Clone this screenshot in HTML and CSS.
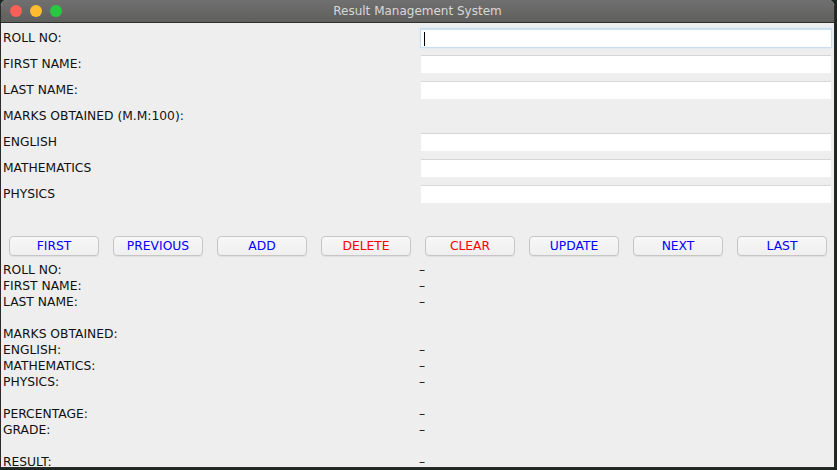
FILE: index.html
```html
<!DOCTYPE html>
<html>
<head>
<meta charset="utf-8">
<link rel="stylesheet" href="styles.css">
</head>
<body>
<div class="window">
  <div class="titlebar">
    <div class="lights">
      <span class="light red"></span>
      <span class="light yellow"></span>
      <span class="light green"></span>
    </div>
    <div class="title">Result Management System</div>
  </div>
  <div class="content">
    <div class="form">
      <div class="label">ROLL NO:</div><div class="cell"><div class="field focused"><span class="caret"></span></div></div>
      <div class="label">FIRST NAME:</div><div class="cell"><div class="field"></div></div>
      <div class="label">LAST NAME:</div><div class="cell"><div class="field"></div></div>
      <div class="label">MARKS OBTAINED (M.M:100):</div><div class="cell"></div>
      <div class="label">ENGLISH</div><div class="cell"><div class="field"></div></div>
      <div class="label">MATHEMATICS</div><div class="cell"><div class="field"></div></div>
      <div class="label">PHYSICS</div><div class="cell"><div class="field"></div></div>
      <div class="label"></div><div class="cell"></div>
    </div>
    <div class="buttons">
      <button class="btn blue">FIRST</button>
      <button class="btn blue">PREVIOUS</button>
      <button class="btn blue">ADD</button>
      <button class="btn red-t">DELETE</button>
      <button class="btn red-t">CLEAR</button>
      <button class="btn blue">UPDATE</button>
      <button class="btn blue">NEXT</button>
      <button class="btn blue">LAST</button>
    </div>
    <div class="result">
      <div>ROLL NO:</div><div>–</div>
      <div>FIRST NAME:</div><div>–</div>
      <div>LAST NAME:</div><div>–</div>
      <div></div><div></div>
      <div>MARKS OBTAINED:</div><div></div>
      <div>ENGLISH:</div><div>–</div>
      <div>MATHEMATICS:</div><div>–</div>
      <div>PHYSICS:</div><div>–</div>
      <div></div><div></div>
      <div>PERCENTAGE:</div><div>–</div>
      <div>GRADE:</div><div>–</div>
      <div></div><div></div>
      <div>RESULT:</div><div>–</div>
    </div>
  </div>
</div>
</body>
</html>
```
FILE: styles.css
```css
html, body {
  margin: 0;
  padding: 0;
  background: #1d2722;
  width: 837px;
  height: 470px;
  overflow: hidden;
}
.window {
  width: 833px;
  height: 467px;
  border: 1px solid #2b2b2b;
  border-top: none;
  border-radius: 6px 6px 0 0;
  background: #eeeeee;
  overflow: hidden;
  font-family: "DejaVu Sans", sans-serif;
  font-size: 12.3px;
  color: #111;
}
.titlebar {
  height: 22px;
  background: linear-gradient(#707070, #5f5f5e);
  border-bottom: 1px solid #2e2e2e;
  position: relative;
  display: flex;
  align-items: center;
}
.lights {
  display: flex;
  gap: 8px;
  padding-left: 9px;
}
.light {
  width: 12px;
  height: 12px;
  border-radius: 50%;
  display: block;
}
.light.red { background: #fe5f57; }
.light.yellow { background: #febc2e; }
.light.green { background: #28c840; }
.title {
  position: absolute;
  left: 0;
  right: 0;
  top: 0;
  line-height: 23px;
  text-align: center;
  color: #d8d8d8;
  font-size: 12px;
  font-family: "DejaVu Sans", sans-serif;
}
.content {
  padding-top: 2px;
}
.form {
  display: grid;
  grid-template-columns: 420px 410px;
  grid-auto-rows: 26px;
}
.label {
  padding-left: 2px;
  line-height: 26px;
  white-space: nowrap;
}
.cell {
  display: flex;
  align-items: center;
}
.field {
  width: 410px;
  height: 17px;
  background: #ffffff;
  border-top: 1px solid #d6d6d6;
  position: relative;
}
.field.focused {
  border-top-color: #cfe0ef;
  box-shadow: 0 0 0 1px #c9ddef, 0 0 2px 2px #e0ebf5;
}
.caret {
  position: absolute;
  left: 3px;
  top: 2px;
  width: 1px;
  height: 14px;
  background: #000;
}
.buttons {
  display: flex;
  gap: 14px;
  padding-left: 8px;
  height: 26px;
  align-items: center;
}
.btn {
  width: 90px;
  height: 20px;
  padding: 0;
  border: 1px solid #c6c6c6;
  border-radius: 4px;
  background: linear-gradient(#f7f7f7, #efefef);
  box-shadow: 0 1px 0 rgba(0,0,0,0.06);
  font-family: "DejaVu Sans", sans-serif;
  font-size: 12.3px;
  line-height: 18px;
}
.btn.blue { color: #0000ff; }
.btn.red-t { color: #ff0000; }
.result {
  display: grid;
  grid-template-columns: 416px 1fr;
  grid-auto-rows: 16px;
  padding-top: 3px;
  padding-left: 2px;
  line-height: 16px;
  white-space: nowrap;
}
```
